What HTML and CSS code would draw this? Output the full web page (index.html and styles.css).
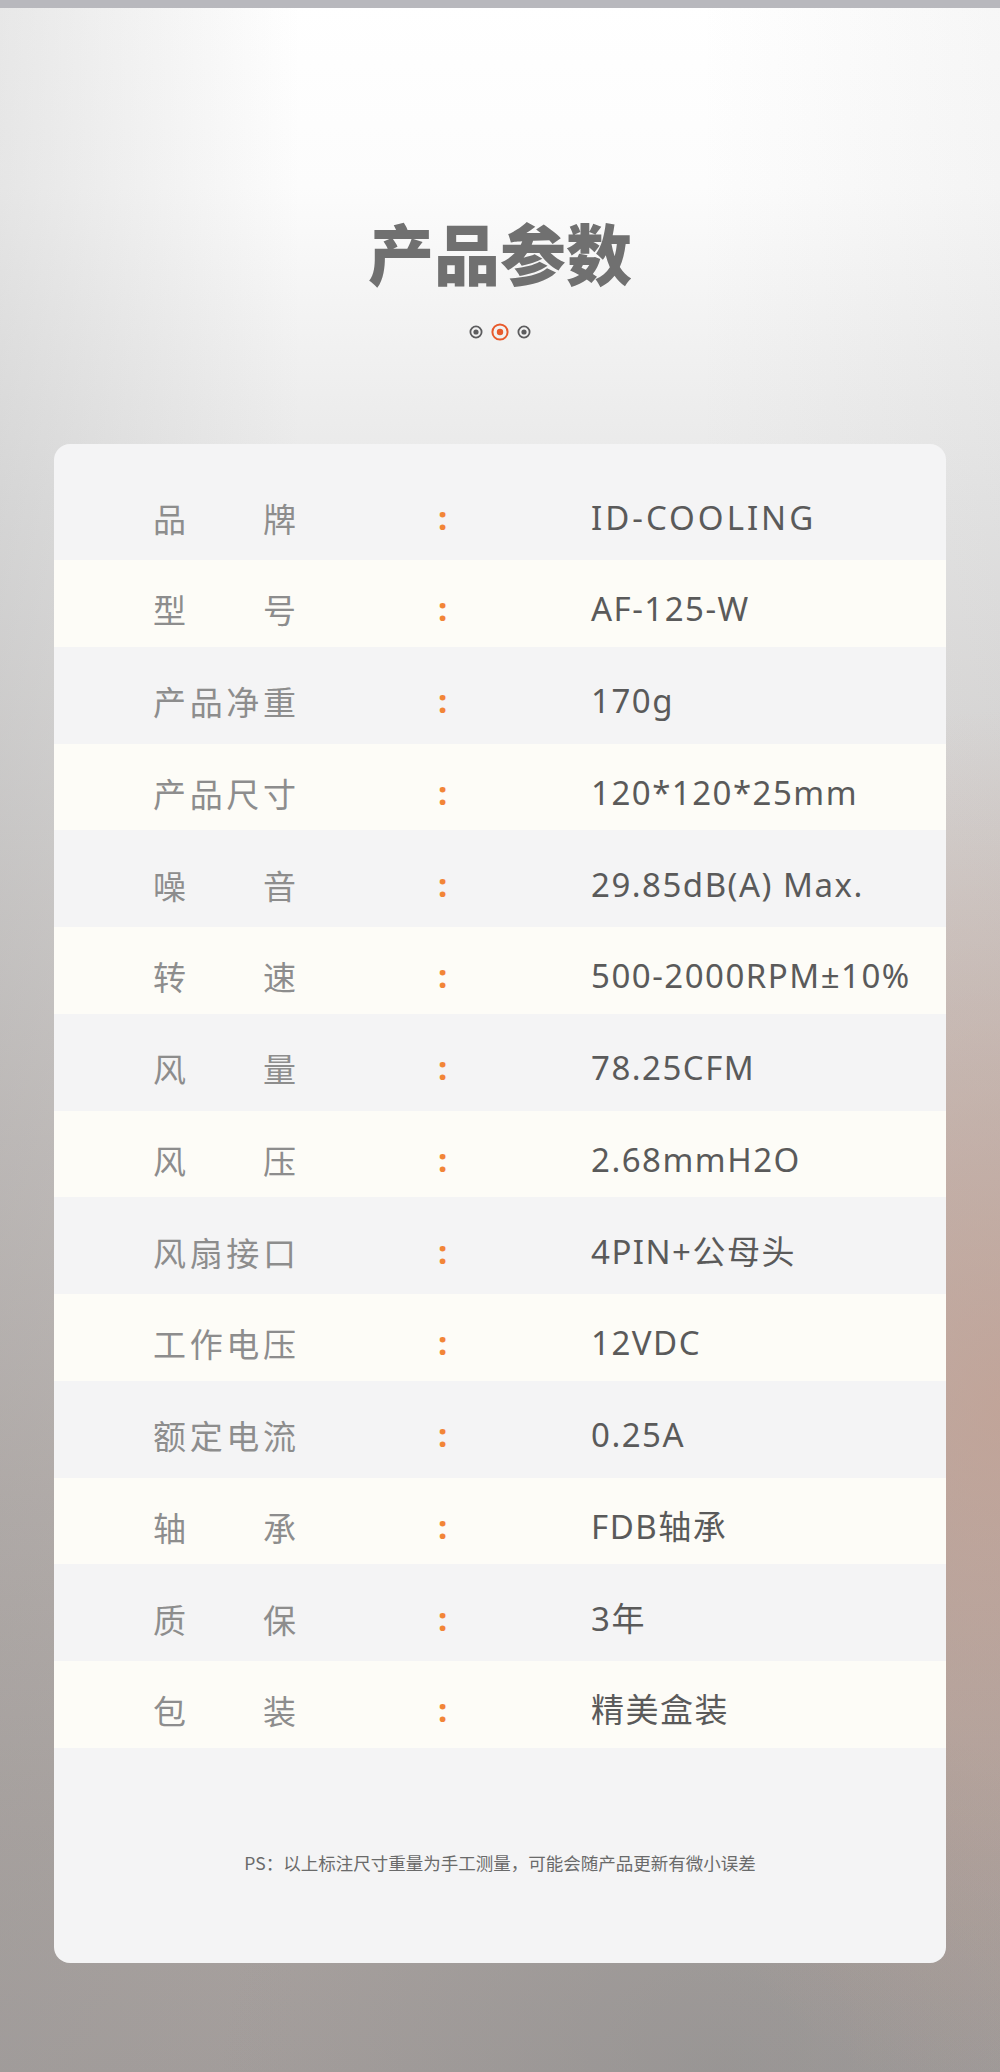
FILE: index.html
```html
<!DOCTYPE html>
<html lang="zh-CN">
<head>
<meta charset="utf-8">
<title>产品参数</title>
<link rel="stylesheet" href="styles.css">
</head>
<body>
<div class="page">
  <div class="topbar"></div>
  <header class="header">
    <h1 class="title">产品参数</h1>
    <div class="dots">
      <svg width="14" height="14" viewBox="0 0 14 14"><circle cx="7" cy="7" r="5.6" fill="none" stroke="#5c5c5e" stroke-width="1.8"/><circle cx="7" cy="7" r="2.6" fill="#5c5c5e"/></svg>
      <svg width="18" height="18" viewBox="0 0 18 18"><circle cx="9" cy="9" r="7.6" fill="none" stroke="#e85a2c" stroke-width="2"/><circle cx="9" cy="9" r="3.2" fill="#e85a2c"/></svg>
      <svg width="14" height="14" viewBox="0 0 14 14"><circle cx="7" cy="7" r="5.6" fill="none" stroke="#5c5c5e" stroke-width="1.8"/><circle cx="7" cy="7" r="2.6" fill="#5c5c5e"/></svg>
    </div>
  </header>

  <section class="card">
    <div class="row odd"><div class="label"><span>品</span><span>牌</span></div><div class="colon">:</div><div class="value wide">ID-COOLING</div></div>
    <div class="row even"><div class="label"><span>型</span><span>号</span></div><div class="colon">:</div><div class="value">AF-125-W</div></div>
    <div class="row odd"><div class="label"><span>产</span><span>品</span><span>净</span><span>重</span></div><div class="colon">:</div><div class="value">170g</div></div>
    <div class="row even"><div class="label"><span>产</span><span>品</span><span>尺</span><span>寸</span></div><div class="colon">:</div><div class="value">120*120*25mm</div></div>
    <div class="row odd"><div class="label"><span>噪</span><span>音</span></div><div class="colon">:</div><div class="value">29.85dB(A) Max.</div></div>
    <div class="row even"><div class="label"><span>转</span><span>速</span></div><div class="colon">:</div><div class="value">500-2000RPM±10%</div></div>
    <div class="row odd"><div class="label"><span>风</span><span>量</span></div><div class="colon">:</div><div class="value">78.25CFM</div></div>
    <div class="row even"><div class="label"><span>风</span><span>压</span></div><div class="colon">:</div><div class="value">2.68mmH2O</div></div>
    <div class="row odd"><div class="label"><span>风</span><span>扇</span><span>接</span><span>口</span></div><div class="colon">:</div><div class="value">4PIN+公母头</div></div>
    <div class="row even"><div class="label"><span>工</span><span>作</span><span>电</span><span>压</span></div><div class="colon">:</div><div class="value">12VDC</div></div>
    <div class="row odd"><div class="label"><span>额</span><span>定</span><span>电</span><span>流</span></div><div class="colon">:</div><div class="value">0.25A</div></div>
    <div class="row even"><div class="label"><span>轴</span><span>承</span></div><div class="colon">:</div><div class="value">FDB轴承</div></div>
    <div class="row odd"><div class="label"><span>质</span><span>保</span></div><div class="colon">:</div><div class="value">3年</div></div>
    <div class="row even"><div class="label"><span>包</span><span>装</span></div><div class="colon">:</div><div class="value">精美盒装</div></div>
    <p class="note">PS：以上标注尺寸重量为手工测量，可能会随产品更新有微小误差</p>
  </section>
</div>
</body>
</html>
```

FILE: styles.css
```css
html, body {
  margin: 0;
  padding: 0;
}

body {
  width: 1000px;
  height: 2072px;
  overflow: hidden;
  font-family: "Noto Sans", "Noto Sans CJK SC", sans-serif;
  background:
    radial-gradient(ellipse 420px 700px at 100% 68%, rgba(196, 160, 146, 0.75), rgba(196, 160, 146, 0) 100%),
    radial-gradient(ellipse 500px 380px at 72% 100%, rgba(140, 140, 140, 0.45), rgba(140, 140, 140, 0) 100%),
    linear-gradient(to right, rgba(150, 150, 150, 0.22), rgba(150, 150, 150, 0) 30%, rgba(150, 150, 150, 0) 70%, rgba(150, 150, 150, 0.08)),
    linear-gradient(to bottom, #ffffff 0%, #fcfcfc 9%, #f2f2f2 16%, #e7e7e7 24%, #d6d4d3 40%, #c6c1bf 55%, #b6afac 72%, #aaa3a0 88%, #a39d9b 100%);
}

.page {
  display: flex;
  flex-direction: column;
  align-items: center;
}

.topbar {
  align-self: stretch;
  height: 8px;
  background: #b8b8bd;
}

.header {
  display: flex;
  flex-direction: column;
  align-items: center;
  padding-top: 203px;
}

.title {
  margin: 0;
  height: 80px;
  line-height: 80px;
  font-family: "Noto Sans CJK SC", sans-serif;
  font-weight: 900;
  font-size: 66px;
  letter-spacing: 0px;
  color: #707070;
}

.dots {
  margin-top: 32px;
  height: 18px;
  display: flex;
  align-items: center;
  gap: 8px;
}

.dots svg {
  display: block;
}

.card {
  margin-top: 103px;
  width: 892px;
  box-sizing: border-box;
  padding-top: 19px;
  border-radius: 16px;
  background: #f4f4f5;
  overflow: hidden;
  display: flex;
  flex-direction: column;
}

.row {
  display: flex;
  align-items: center;
  box-sizing: border-box;
  padding-left: 99px;
  padding-top: 12px;
}

.row.odd {
  height: 97px;
  background: #f4f4f5;
}

.row.even {
  height: 86.5px;
  background: #fdfcf7;
}

.label {
  width: 143px;
  display: flex;
  justify-content: space-between;
  font-family: "Noto Sans CJK SC", sans-serif;
  font-size: 33px;
  line-height: 44px;
  color: #8d8d8d;
}

.colon {
  width: 155px;
  box-sizing: border-box;
  padding-left: 142px;
  font-family: "Noto Sans", sans-serif;
  font-size: 33px;
  line-height: 44px;
  color: #f28537;
  font-weight: 700;
  margin-right: 140px;
}

.value {
  font-family: "Noto Sans", "Noto Sans CJK SC", sans-serif;
  font-size: 33px;
  line-height: 44px;
  letter-spacing: 1.5px;
  color: #5a5a5a;
}

.value.wide {
  letter-spacing: 3px;
}

.note {
  margin: 103px 0 88px;
  text-align: center;
  font-family: "Noto Sans CJK SC", sans-serif;
  font-size: 17.5px;
  line-height: 24px;
  color: #6a6a6a;
}
```
